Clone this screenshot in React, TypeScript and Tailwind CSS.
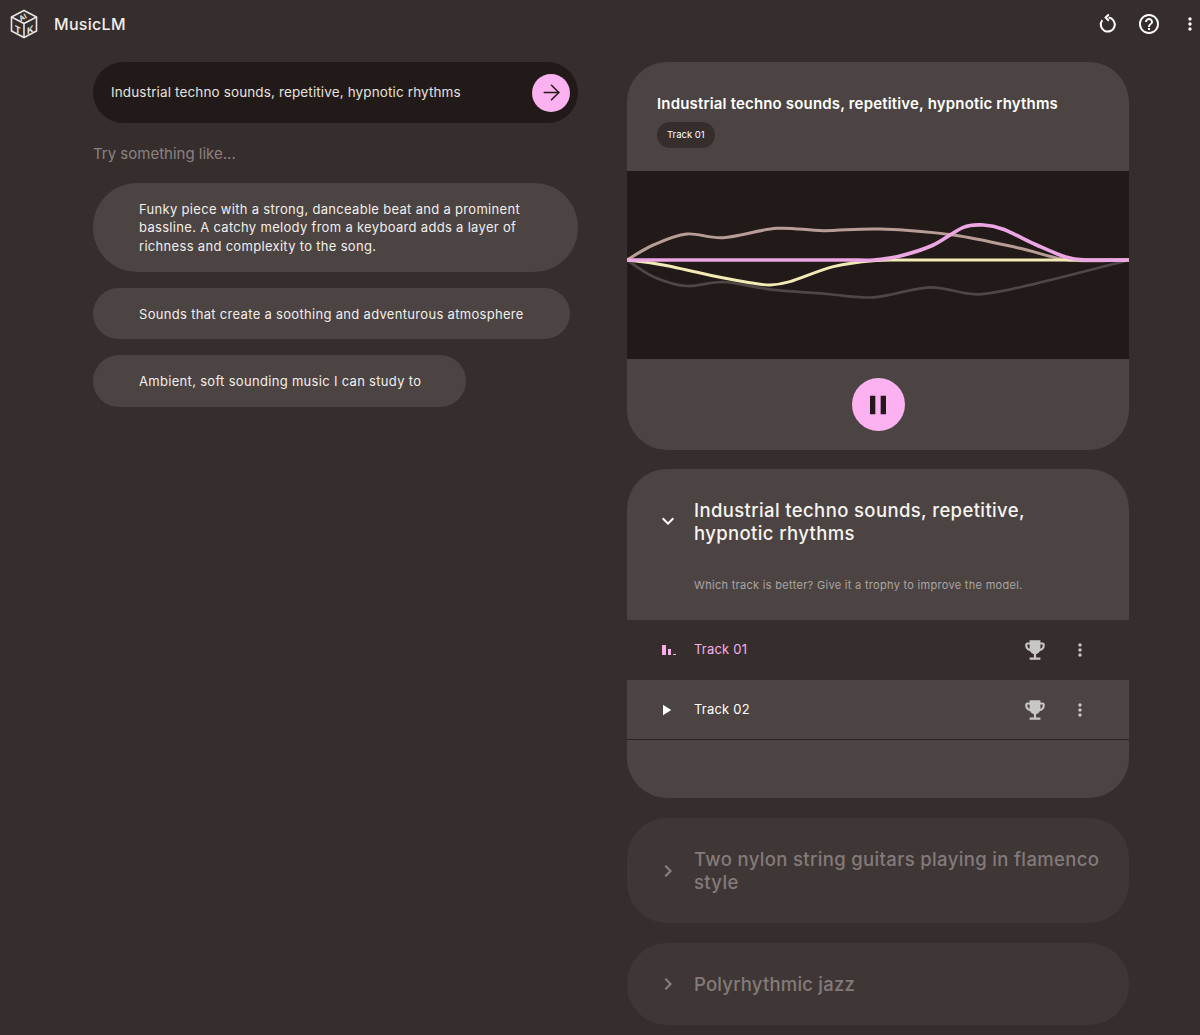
import { ArrowRight } from 'lucide-react';
import { MdChevronRight, MdEmojiEvents, MdHelpOutline, MdKeyboardArrowDown, MdMoreVert, MdPause, MdPlayArrow } from 'react-icons/md';

const suggestions = [
  {
    text: 'Funky piece with a strong, danceable beat and a prominent bassline. A catchy melody from a keyboard adds a layer of richness and complexity to the song.',
    cls: 'w-[485px] h-[89px] rounded-[44px] pr-[50px]',
  },
  { text: 'Sounds that create a soothing and adventurous atmosphere', cls: 'w-[477px] h-[51px] rounded-[26px] pt-[1px]' },
  { text: 'Ambient, soft sounding music I can study to', cls: 'w-[373px] h-[52px] rounded-[26px]' },
];

// waveform points, in the same units as the svg viewBox
const waves = [
  { color: '#4f4745', width: 8, pts: [[21, 270], [100, 320], [200, 348], [310, 336], [450, 358], [620, 372], [760, 382], [930, 352], [1075, 373], [1250, 340], [1527, 270]] },
  { color: '#b79d96', width: 9, pts: [[21, 270], [100, 225], [200, 192], [310, 203], [470, 175], [610, 182], [780, 177], [1000, 195], [1200, 235], [1345, 270], [1527, 270]] },
  { color: '#f4eab6', width: 9, pts: [[21, 270], [130, 285], [300, 322], [390, 338], [450, 345], [510, 335], [640, 290], [760, 272], [900, 270], [1527, 270]] },
  { color: '#eca6e4', width: 11, pts: [[21, 270], [300, 270], [600, 270], [690, 270], [760, 270], [840, 258], [940, 225], [1030, 172], [1090, 165], [1150, 178], [1250, 225], [1340, 262], [1400, 270], [1527, 270]] },
];

function smooth(pts: number[][]) {
  let d = `M${pts[0][0]} ${pts[0][1]}`;
  for (let i = 0; i < pts.length - 1; i++) {
    const p0 = pts[i - 1] || pts[i];
    const p1 = pts[i];
    const p2 = pts[i + 1];
    const p3 = pts[i + 2] || p2;
    d += ` C${p1[0] + (p2[0] - p0[0]) / 6} ${p1[1] + (p2[1] - p0[1]) / 6} ${p2[0] - (p3[0] - p1[0]) / 6} ${p2[1] - (p3[1] - p1[1]) / 6} ${p2[0]} ${p2[1]}`;
  }
  return d;
}

function Logo() {
  return (
    <svg width="28" height="30" viewBox="0 0 28 30" fill="none" stroke="#e8e4e2" strokeWidth="1.6">
      <path d="M14 1.5 26.5 8v14L14 28.5 1.5 22V8z" />
      <path d="M1.5 8 14 14.5 26.5 8M14 14.5v14" />
      <g fill="#e8e4e2" stroke="none" textAnchor="middle" fontFamily="Inter, sans-serif" fontWeight="700">
        <text fontSize="7" transform="translate(14 10.5) rotate(-28)">AI</text>
        <text fontSize="9" transform="translate(7.8 24) skewY(26)">T</text>
        <text fontSize="9" transform="translate(20.2 24) skewY(-26)">K</text>
      </g>
    </svg>
  );
}

function ReloadIcon() {
  return (
    <svg width="24" height="24" viewBox="0 0 24 24" fill="none" stroke="#fff" strokeWidth="2">
      <path d="M12.5 5.6a7 7 0 1 1-6.2 2.6" />
      <path d="M12.8 2.4 9.6 5.6l3.2 3.2" />
    </svg>
  );
}

function TrackRow({ name, active }: { name: string; active?: boolean }) {
  return (
    <div className={`flex h-[60px] items-center pl-[34px] pr-[39px] ${active ? 'bg-[#362e2d] pb-[1px] text-[#f6aeea]' : 'border-b border-[#2c2524] text-white'}`}>
      <div className="flex w-[33px] items-center">
        {active ? (
          <div className="ml-[1px] flex h-[10px] items-end gap-[2px]">
            <span className="h-[10px] w-[3.5px] bg-[#f6aeea]" />
            <span className="h-[6px] w-[3.5px] bg-[#f6aeea]" />
            <span className="h-[1px] w-[3px] bg-[#f6aeea]" />
          </div>
        ) : (
          <MdPlayArrow className="-ml-[4px] text-[18px]" />
        )}
      </div>
      <span className="flex-1 text-[13px] tracking-[0.2px]">{name}</span>
      <MdEmojiEvents className="mr-[22px] text-[26px] text-[#c9c7c6]" />
      <MdMoreVert className="text-[20px] text-[#c9c7c6]" />
    </div>
  );
}

export default function App() {
  return (
    <div className="min-h-[1035px] overflow-hidden bg-[#362e2d] text-white font-['Inter','Liberation_Sans',sans-serif]">
      <header className="flex h-[48px] items-center pl-[10px]">
        <Logo />
        <span className="ml-[16px] flex-1 text-[16px] font-medium tracking-[0.3px] text-[#f2eeec]">MusicLM</span>
        <ReloadIcon />
        <MdHelpOutline className="ml-[17.5px] text-[24px]" />
        <MdMoreVert className="ml-[19px] text-[20px]" />
      </header>

      <main className="flex items-start pl-[93px] pt-[14px]">
        <section className="w-[485px]">
          <div className="flex h-[61px] items-center justify-between rounded-full bg-[#221a19] pl-[18px] pr-[8px]">
            <span className="text-[13.5px] tracking-[0.13px] text-[#e6e1df]">Industrial techno sounds, repetitive, hypnotic rhythms</span>
            <div className="flex h-[38px] w-[38px] items-center justify-center rounded-full bg-[#fcb1f0] text-[#221a19]">
              <ArrowRight size={25} strokeWidth={1.5} />
            </div>
          </div>
          <p className="mb-[19px] mt-[21px] text-[15px] leading-[20px] text-[#8a8281]">Try something like...</p>
          <div className="flex flex-col gap-[16px]">
            {suggestions.map((s) => (
              <div key={s.text} className={`flex items-center bg-[#4b4442] pl-[46px] text-[13px] leading-[18.5px] tracking-[0.31px] text-[#f2eeec] ${s.cls}`}>
                {s.text}
              </div>
            ))}
          </div>
        </section>

        <section className="ml-[49px] flex w-[502px] flex-col gap-[20px]">
          <div className="-mb-[1px] overflow-hidden rounded-[40px] bg-[#4b4442]">
            <div className="h-[109px] px-[30px] pt-[33px]">
              <h2 className="text-[15px] font-semibold leading-[18px] tracking-[0.17px]">Industrial techno sounds, repetitive, hypnotic rhythms</h2>
              <span className="mt-[9px] inline-flex h-[26px] items-center rounded-full bg-[#362e2d] px-[10px] pt-[1px] text-[9.5px]">Track 01</span>
            </div>
            <svg className="block h-[188px] w-full bg-[#221a19]" viewBox="21 3 1506 564" preserveAspectRatio="none" fill="none">
              {waves.map((w) => (
                <path key={w.color} d={smooth(w.pts)} stroke={w.color} strokeWidth={w.width} />
              ))}
            </svg>
            <div className="flex h-[91px] items-center justify-center">
              <div className="flex h-[53px] w-[53px] items-center justify-center rounded-full bg-[#fcb1f0] text-[#221a19]">
                <MdPause className="text-[32px]" />
              </div>
            </div>
          </div>

          <div className="overflow-hidden rounded-[40px] bg-[#4b4442]">
            <div className="flex h-[151px] pl-[29px] pr-[30px] pt-[30px]">
              <MdKeyboardArrowDown className="mt-[10px] w-[24px] shrink-0 text-[24px]" />
              <div className="ml-[14px]">
                <h3 className="text-[18.5px] font-medium leading-[23px] tracking-[0.38px] text-[#f7f3f1]">Industrial techno sounds, repetitive, hypnotic rhythms</h3>
                <p className="mt-[32px] text-[11px] leading-[16px] tracking-[0.3px] text-[#aba5a3]">Which track is better? Give it a trophy to improve the model.</p>
              </div>
            </div>
            <TrackRow name="Track 01" active />
            <TrackRow name="Track 02" />
            <div className="h-[58px]" />
          </div>

          <div className="flex h-[105px] rounded-[40px] bg-[#3f3736] pl-[29px] pr-[20px] pt-[30px]">
            <MdChevronRight className="mt-[11px] shrink-0 text-[24px] text-[#8a8281]" />
            <h3 className="ml-[14px] text-[18.5px] font-medium leading-[23px] tracking-[0.35px] text-[#837b7a]">Two nylon string guitars playing in flamenco style</h3>
          </div>

          <div className="flex h-[82px] items-center rounded-[40px] bg-[#3f3736] pl-[29px] pr-[20px]">
            <MdChevronRight className="shrink-0 text-[24px] text-[#8a8281]" />
            <h3 className="ml-[14px] text-[18.5px] font-medium leading-[23px] tracking-[0.2px] text-[#837b7a]">Polyrhythmic jazz</h3>
          </div>
        </section>
      </main>
    </div>
  );
}
